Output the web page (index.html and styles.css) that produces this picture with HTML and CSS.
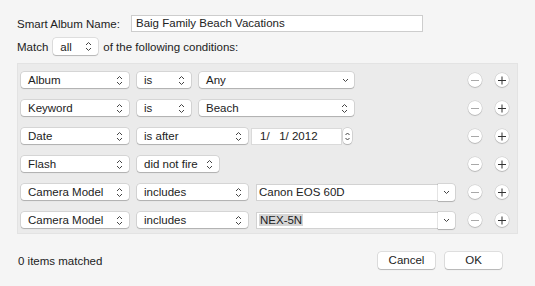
FILE: index.html
```html
<!DOCTYPE html>
<html lang="en">
<head>
  <meta charset="UTF-8" />
  <title>Smart Album</title>
  <link rel="stylesheet" href="styles.css">
</head>
<body>

<div class="dialog">
  <div class="name-row">
    <span class="label">Smart Album Name:</span>
    <div class="field name-field">Baig Family Beach Vacations</div>
  </div>

  <div class="match-row">
    <span>Match</span>
    <div class="popup match-popup"><span>all</span>
      <svg class="updown" viewBox="0 0 7 11"><path d="M1 4 L3.5 1.5 L6 4 M1 7 L3.5 9.5 L6 7"/></svg>
    </div>
    <span>of the following conditions:</span>
  </div>

  <div class="panel">
    <div class="rule">
      <div class="popup c1"><span>Album</span><svg class="updown" viewBox="0 0 7 11"><path d="M1 4 L3.5 1.5 L6 4 M1 7 L3.5 9.5 L6 7"/></svg></div>
      <div class="popup c2"><span>is</span><svg class="updown" viewBox="0 0 7 11"><path d="M1 4 L3.5 1.5 L6 4 M1 7 L3.5 9.5 L6 7"/></svg></div>
      <div class="popup c3"><span>Any</span><svg class="down" viewBox="0 0 7 5"><path d="M1 1 L3.5 3.5 L6 1"/></svg></div>
      <div class="pm"><span class="circle minus"></span><span class="circle plus"></span></div>
    </div>

    <div class="rule">
      <div class="popup c1"><span>Keyword</span><svg class="updown" viewBox="0 0 7 11"><path d="M1 4 L3.5 1.5 L6 4 M1 7 L3.5 9.5 L6 7"/></svg></div>
      <div class="popup c2"><span>is</span><svg class="updown" viewBox="0 0 7 11"><path d="M1 4 L3.5 1.5 L6 4 M1 7 L3.5 9.5 L6 7"/></svg></div>
      <div class="popup c3"><span>Beach</span><svg class="updown" viewBox="0 0 7 11"><path d="M1 4 L3.5 1.5 L6 4 M1 7 L3.5 9.5 L6 7"/></svg></div>
      <div class="pm"><span class="circle minus"></span><span class="circle plus"></span></div>
    </div>

    <div class="rule">
      <div class="popup c1"><span>Date</span><svg class="updown" viewBox="0 0 7 11"><path d="M1 4 L3.5 1.5 L6 4 M1 7 L3.5 9.5 L6 7"/></svg></div>
      <div class="popup c2 wide"><span>is after</span><svg class="updown" viewBox="0 0 7 11"><path d="M1 4 L3.5 1.5 L6 4 M1 7 L3.5 9.5 L6 7"/></svg></div>
      <div class="field date-field">1/&nbsp;&nbsp; 1/ 2012</div>
      <div class="stepper"><svg viewBox="0 0 7 11"><path d="M1.5 4 L3.5 2 L5.5 4 M1.5 7 L3.5 9 L5.5 7"/></svg></div>
      <div class="pm"><span class="circle minus"></span><span class="circle plus"></span></div>
    </div>

    <div class="rule">
      <div class="popup c1"><span>Flash</span><svg class="updown" viewBox="0 0 7 11"><path d="M1 4 L3.5 1.5 L6 4 M1 7 L3.5 9.5 L6 7"/></svg></div>
      <div class="popup c2 fire"><span>did not fire</span><svg class="updown" viewBox="0 0 7 11"><path d="M1 4 L3.5 1.5 L6 4 M1 7 L3.5 9.5 L6 7"/></svg></div>
      <div class="pm"><span class="circle minus"></span><span class="circle plus"></span></div>
    </div>

    <div class="rule">
      <div class="popup c1"><span>Camera Model</span><svg class="updown" viewBox="0 0 7 11"><path d="M1 4 L3.5 1.5 L6 4 M1 7 L3.5 9.5 L6 7"/></svg></div>
      <div class="popup c2 wide"><span>includes</span><svg class="updown" viewBox="0 0 7 11"><path d="M1 4 L3.5 1.5 L6 4 M1 7 L3.5 9.5 L6 7"/></svg></div>
      <div class="combo">
        <div class="combo-text">Canon EOS 60D</div>
        <div class="combo-btn"><svg class="down" viewBox="0 0 7 5"><path d="M1 1 L3.5 3.5 L6 1"/></svg></div>
      </div>
      <div class="pm"><span class="circle minus"></span><span class="circle plus"></span></div>
    </div>

    <div class="rule">
      <div class="popup c1"><span>Camera Model</span><svg class="updown" viewBox="0 0 7 11"><path d="M1 4 L3.5 1.5 L6 4 M1 7 L3.5 9.5 L6 7"/></svg></div>
      <div class="popup c2 wide"><span>includes</span><svg class="updown" viewBox="0 0 7 11"><path d="M1 4 L3.5 1.5 L6 4 M1 7 L3.5 9.5 L6 7"/></svg></div>
      <div class="combo">
        <div class="combo-text"><span class="selected">NEX-5N</span></div>
        <div class="combo-btn"><svg class="down" viewBox="0 0 7 5"><path d="M1 1 L3.5 3.5 L6 1"/></svg></div>
      </div>
      <div class="pm"><span class="circle minus"></span><span class="circle plus"></span></div>
    </div>
  </div>

  <div class="footer">
    <span class="count">0 items matched</span>
    <div class="buttons">
      <div class="btn">Cancel</div>
      <div class="btn">OK</div>
    </div>
  </div>
</div>

</body>
</html>
```

FILE: styles.css
```css
body {
  margin: 0;
  background: #f5f5f5;
  font-family: "Liberation Sans", Arial, sans-serif;
  font-size: 11.5px;
  color: #222;
}
.dialog {
  width: 535px;
  height: 286px;
  padding: 15px 17px 0 17px;
  box-sizing: border-box;
}
.name-row {
  display: flex;
  align-items: center;
  height: 17px;
}
.name-row .label {
  width: 114px;
}
.field {
  background: #fff;
  border: 1px solid #cdcdcd;
  box-sizing: border-box;
  height: 17px;
  line-height: 15px;
  padding-left: 4px;
}
.name-field {
  width: 292px;
}
.match-row {
  display: flex;
  align-items: center;
  height: 17px;
  margin-top: 6px;
}
.popup {
  display: flex;
  align-items: center;
  justify-content: space-between;
  background: #fff;
  border-radius: 3px;
  box-shadow: 0 0 0 0.5px rgba(0, 0, 0, 0.18), 0 1px 1px rgba(0, 0, 0, 0.18);
  height: 16px;
  padding: 0 6px 0 7px;
  box-sizing: border-box;
}
.match-popup {
  width: 45px;
  margin: 0 5px 0 5px;
  height: 17px;
}
.updown, .down, .stepper svg {
  fill: none;
  stroke: #444;
  stroke-width: 1;
}
.updown {
  width: 7px;
  height: 11px;
}
.down {
  width: 7px;
  height: 5px;
}
.panel {
  margin-top: 8px;
  height: 171px;
  background: #ebebeb;
  border: 1px solid #e3e3e3;
  box-sizing: border-box;
  padding: 8px 8px 0 3px;
}
.rule {
  display: flex;
  align-items: center;
  height: 16px;
  margin-bottom: 12px;
}
.c1 {
  width: 108px;
  margin-right: 8px;
}
.c2 {
  width: 54px;
  margin-right: 8px;
}
.c2.wide {
  width: 111px;
  margin-right: 3px;
}
.c2.fire {
  width: 82px;
}
.c3 {
  width: 155px;
}
.c3 .down {
  margin-right: -1px;
}
.date-field {
  width: 91px;
  padding-left: 8px;
  border-color: #dadada;
}
.stepper {
  width: 9px;
  height: 16px;
  margin-left: 1px;
  background: #fff;
  border-radius: 4px;
  box-shadow: 0 0 0 0.5px rgba(0, 0, 0, 0.2), 0 1px 1px rgba(0, 0, 0, 0.15);
  display: flex;
  align-items: center;
  justify-content: center;
}
.stepper svg {
  width: 7px;
  height: 11px;
}
.combo {
  display: flex;
  height: 17px;
  margin-left: 5px;
}
.combo-text {
  width: 182px;
  background: #fff;
  border: 1px solid #d2d2d2;
  border-right: none;
  box-sizing: border-box;
  line-height: 15px;
  padding-left: 2px;
}
.selected {
  background: #d6d6d6;
  padding: 0 1px;
}
.combo-btn {
  width: 17px;
  background: #fff;
  border-radius: 0 3px 3px 0;
  box-shadow: 0 0 0 0.5px rgba(0, 0, 0, 0.18), 0 1px 1px rgba(0, 0, 0, 0.18);
  display: flex;
  align-items: center;
  justify-content: center;
}
.pm {
  margin-left: auto;
  display: flex;
  gap: 13px;
}
.circle {
  position: relative;
  width: 14px;
  height: 14px;
  border-radius: 50%;
  background: #fff;
  box-shadow: 0 0 0 0.5px rgba(0, 0, 0, 0.15), 0 1px 1px rgba(0, 0, 0, 0.15);
}
.circle::before,
.plus::after {
  content: "";
  position: absolute;
  left: 3px;
  top: 6.5px;
  width: 8px;
  height: 1px;
}
.minus::before {
  background: #a8a8a8;
}
.plus::before,
.plus::after {
  background: #333;
}
.plus::after {
  transform: rotate(90deg);
}
.footer {
  display: flex;
  align-items: center;
  justify-content: space-between;
  margin-top: 18px;
  padding-left: 1px;
  padding-right: 16px;
}
.buttons {
  display: flex;
  gap: 10px;
}
.btn {
  width: 57px;
  height: 17px;
  line-height: 17px;
  text-align: center;
  background: #fff;
  border-radius: 3px;
  box-shadow: 0 0 0 0.5px rgba(0, 0, 0, 0.18), 0 1px 1px rgba(0, 0, 0, 0.18);
}
```
